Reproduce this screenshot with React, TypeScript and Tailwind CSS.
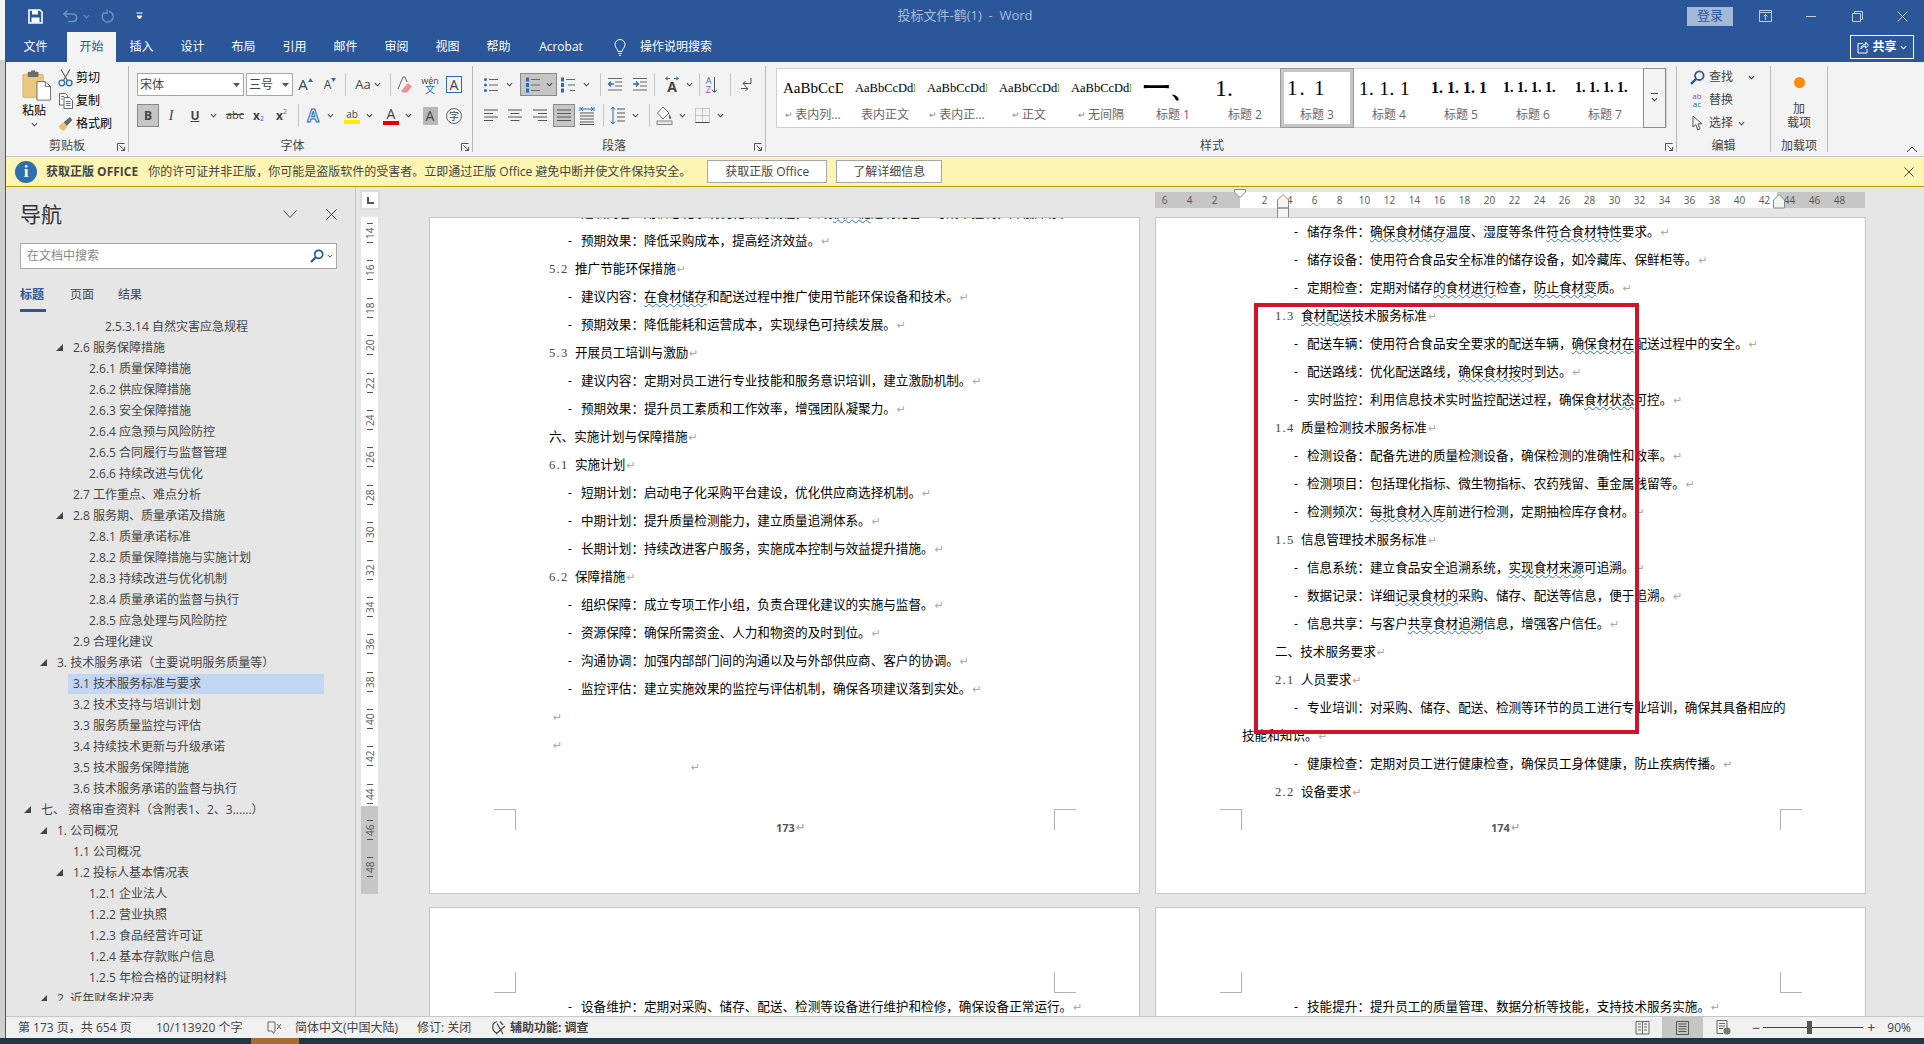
import React from "react";

const cx = (...a: (string | undefined | false)[]) => a.filter(Boolean).join(" ");

function Chev({ c = "#444", s = 7 }: { c?: string; s?: number }) {
  return (
    <svg width={s} height={s} viewBox="0 0 8 8" className="shrink-0">
      <path d="M1 2.5 L4 5.5 L7 2.5" fill="none" stroke={c} strokeWidth="1.2" />
    </svg>
  );
}

function Slot({ w, children, className }: { w: string; children?: React.ReactNode; className?: string }) {
  return <div className={cx("flex h-[23px] shrink-0 items-center justify-center", w, className)}>{children}</div>;
}

function Sep({ className }: { className?: string }) {
  return <div className={cx("h-[23px] w-px shrink-0 bg-[#c6c6c6]", className)} />;
}

function Launcher() {
  return (
    <svg width="8" height="8" viewBox="0 0 8 8" className="absolute bottom-[5px] right-[3px]">
      <path d="M0.5 7.5V0.5H7.5M2.5 2.5L7 7M7.5 4V7.5H4" fill="none" stroke="#555" strokeWidth="1" />
    </svg>
  );
}

function Lines({ kind }: { kind: "left" | "center" | "right" | "just" }) {
  const rows =
    kind === "left"
      ? ["M1 2H15", "M1 5.5H10", "M1 9H15", "M1 12.5H10"]
      : kind === "center"
        ? ["M1 2H15", "M3.5 5.5H12.5", "M1 9H15", "M3.5 12.5H12.5"]
        : kind === "right"
          ? ["M1 2H15", "M6 5.5H15", "M1 9H15", "M6 12.5H15"]
          : ["M1 2H15", "M1 5.5H15", "M1 9H15", "M1 12.5H15"];
  return (
    <svg width="16" height="15" viewBox="0 0 16 15">
      {rows.map((d) => (
        <path key={d} d={d} stroke="#555" strokeWidth="1" />
      ))}
    </svg>
  );
}

function Paste() {
  return (
    <svg width="29" height="31" viewBox="0 0 30 36" preserveAspectRatio="none">
      <rect x="1" y="5" width="21" height="27" rx="1.5" fill="#eac77e" stroke="#d8b163" />
      <rect x="6" y="2" width="11" height="6" rx="1" fill="#6b6b6b" />
      <rect x="9.5" y="0.5" width="4" height="3" fill="#6b6b6b" />
      <path d="M15.5 13.5H24L29.5 19V35H15.5Z" fill="#fff" stroke="#666" />
      <path d="M24 13.5V19H29.5" fill="none" stroke="#666" />
    </svg>
  );
}

function Scissors() {
  return (
    <svg width="15" height="18" viewBox="0 0 15 18">
      <path d="M3 0.5L9.5 11.5M12 0.5L5.5 11.5" stroke="#666" strokeWidth="1.2" fill="none" />
      <circle cx="3.8" cy="14" r="2.8" fill="none" stroke="#2b6cb8" strokeWidth="1.3" />
      <circle cx="11.2" cy="14" r="2.8" fill="none" stroke="#2b6cb8" strokeWidth="1.3" />
    </svg>
  );
}

function Copy() {
  return (
    <svg width="14" height="16" viewBox="0 0 14 16">
      <path d="M0.5 0.5H6.5L8.5 2.5V12H0.5Z" fill="#fff" stroke="#666" />
      <path d="M5 4.5H10.5L13.5 7.5V15.5H5Z" fill="#fff" stroke="#666" />
      <path d="M7 8.5H11.5M7 10.5H11.5M7 12.5H11.5M2 3.5H5M2 6H4" stroke="#2b6cb8" strokeWidth="0.9" />
    </svg>
  );
}

function Brush() {
  return (
    <svg width="16" height="16" viewBox="0 0 16 16">
      <path d="M0.5 10.5L5.5 6L10 11L6 15.5C3.5 15 1.5 13 0.5 10.5Z" fill="#e9c27a" />
      <path d="M6 6L12.5 0.5L15.5 3.5L9.5 10Z" fill="#6a6a6a" />
    </svg>
  );
}

function SearchIcon({ s = 14 }: { s?: number }) {
  return (
    <svg width={s} height={s} viewBox="0 0 14 14">
      <circle cx="8.7" cy="5.3" r="4" fill="none" stroke="#2b579a" strokeWidth="1.7" />
      <path d="M5.8 8.2L1 13" stroke="#2b579a" strokeWidth="2.2" />
    </svg>
  );
}

function Tri() {
  return (
    <svg width="7" height="7" viewBox="0 0 7 7" className="shrink-0">
      <path d="M7 0V7H0Z" fill="#444" />
    </svg>
  );
}

function GroupLabel({ children, className }: { children: React.ReactNode; className?: string }) {
  return (
    <div className={cx("absolute bottom-[2px] left-0 text-center text-[12px] leading-[16px] text-[#444]", className ?? "right-0")}>{children}</div>
  );
}

function Clipboard() {
  return (
    <div className="relative flex h-full w-[122px] shrink-0 pl-[16px] pt-[8px]">
      <div className="flex w-[36px] flex-col items-start">
        <Paste />
        <span className="mt-[3px] text-[12px] leading-[14px]">粘贴</span>
        <span className="ml-[9px] mt-[3px]">
          <Chev />
        </span>
      </div>
      <div className="-mt-[1px] flex flex-col gap-[5px] text-[12px] leading-[18px]">
        <div className="flex h-[18px] items-center gap-[3px]"><span className="flex w-[15px] justify-center"><Scissors /></span>剪切</div>
        <div className="flex h-[18px] items-center gap-[3px]"><span className="flex w-[15px] justify-center"><Copy /></span>复制</div>
        <div className="flex h-[18px] items-center gap-[3px]"><span className="flex w-[15px] justify-center"><Brush /></span>格式刷</div>
      </div>
      <GroupLabel>剪贴板</GroupLabel>
      <Launcher />
    </div>
  );
}

function Vbar() {
  return <div className="my-[4px] h-[86px] w-px shrink-0 bg-[#b9b9b9]" />;
}

function Combo({ w, label }: { w: string; label: string }) {
  return (
    <div className={cx("flex h-[23px] shrink-0 items-center justify-between border border-[#a6a6a6] bg-white pl-[2px] pr-[3px] text-[12px]", w)}>
      <span>{label}</span>
      <svg width="7" height="4" viewBox="0 0 7 4"><path d="M0 0H7L3.5 4Z" fill="#555" /></svg>
    </div>
  );
}

function FontGroup() {
  return (
    <div className="relative h-full w-[343px] shrink-0 pl-[8px] pt-[11px] text-[#444]">
      <div className="flex h-[23px] items-center">
        <Combo w="w-[107px]" label="宋体" />
        <Combo w="ml-[2px] w-[47px]" label="三号" />
        <Slot w="w-[25px]">
          <span className="text-[15px] leading-none">A</span>
          <svg width="5" height="4" viewBox="0 0 5 4" className="mb-[10px]"><path d="M0 4L2.5 0L5 4Z" fill="#2b6cb8" /></svg>
        </Slot>
        <Slot w="w-[24px]">
          <span className="text-[12px] leading-none">A</span>
          <svg width="5" height="4" viewBox="0 0 5 4" className="mb-[10px]"><path d="M0 0L2.5 4L5 0Z" fill="#2b6cb8" /></svg>
        </Slot>
        <Sep className="ml-[3px]" />
        <Slot w="w-[44px]" className="gap-[3px]"><span className="text-[13px]">Aa</span><Chev /></Slot>
        <Sep />
        <Slot w="w-[27px]">
          <svg width="16" height="18" viewBox="0 0 16 18">
            <path d="M1 13L6 1H8L10 6" fill="none" stroke="#666" />
            <path d="M4 15L11 7L15 10.5L10 16.5H6Z" fill="#ef8f9a" />
          </svg>
        </Slot>
        <Slot w="w-[24px]">
          <div className="flex flex-col items-center text-[9px] leading-[9px]">
            <span>wén</span>
            <span className="text-[10px] text-[#2b6cb8]">文</span>
          </div>
        </Slot>
        <Slot w="w-[24px]">
          <div className="flex h-[17px] w-[16px] items-center justify-center border border-[#2b6cb8] text-[14px] leading-none">A</div>
        </Slot>
      </div>
      <div className="mt-[8px] flex h-[23px] items-center">
        <Slot w="w-[22px]" className="border border-[#8a8a8a] bg-[#c6c6c6]"><b className="text-[12px]">B</b></Slot>
        <Slot w="w-[24px]"><i className="font-['Liberation_Serif',serif] text-[14px]">I</i></Slot>
        <Slot w="w-[24px]"><b className="text-[12px] underline">U</b></Slot>
        <Slot w="w-[12px]"><Chev /></Slot>
        <Slot w="ml-[4px] w-[24px]"><span className="text-[11px] line-through">abc</span></Slot>
        <Slot w="w-[23px]"><b className="text-[12px]">x</b><span className="mt-[7px] text-[7px] text-[#2b6cb8]">2</span></Slot>
        <Slot w="w-[23px]"><b className="text-[12px]">x</b><span className="mb-[7px] text-[7px] text-[#2b6cb8]">2</span></Slot>
        <Sep className="ml-[5px]" />
        <Slot w="ml-[2px] w-[24px]"><span className="text-[17px] font-bold leading-none text-[#dbe9f7] [-webkit-text-stroke:1px_#2b6cb8]">A</span></Slot>
        <Slot w="w-[10px]"><Chev /></Slot>
        <Slot w="ml-[5px] w-[24px]">
          <div className="flex flex-col items-center leading-none">
            <span className="text-[10px] leading-[12px]">ab</span>
            <span className="h-[4px] w-[16px] bg-[#ffeb00]" />
          </div>
        </Slot>
        <Slot w="w-[10px]"><Chev /></Slot>
        <Slot w="ml-[5px] w-[24px]">
          <div className="flex flex-col items-center leading-none">
            <span className="text-[14px] leading-[14px]">A</span>
            <span className="h-[4px] w-[16px] bg-[#e80000]" />
          </div>
        </Slot>
        <Slot w="w-[10px]"><Chev /></Slot>
        <Slot w="ml-[7px] w-[20px]"><div className="flex h-[18px] w-[15px] items-center justify-center bg-[#b8b8b8] text-[14px] leading-none">A</div></Slot>
        <Slot w="ml-[4px] w-[20px]"><div className="flex h-[16px] w-[16px] items-center justify-center rounded-full border border-[#666] text-[10px] leading-none">字</div></Slot>
      </div>
      <GroupLabel className="right-[16px]">字体</GroupLabel>
      <Launcher />
    </div>
  );
}

function ListIcon({ num = false, multi = false }: { num?: boolean; multi?: boolean }) {
  return (
    <svg width="16" height="16" viewBox="0 0 16 16">
      {[2.5, 8, 13.5].map((y, i) => (
        <g key={y}>
          {num ? (
            <rect x="1" y={y - 2} width="3" height="4" fill="#2b6cb8" />
          ) : (
            <circle cx="2.5" cy={y} r="1.5" fill="#2b6cb8" />
          )}
          <path d={`M${multi ? 6 + i * 2 : 6} ${y}H15`} stroke="#666" />
        </g>
      ))}
    </svg>
  );
}

function Indent({ out }: { out?: boolean }) {
  return (
    <svg width="16" height="15" viewBox="0 0 16 15">
      <path d="M1 1.5H15M8 5H15M8 9H15M1 13H15" stroke="#666" />
      <path d={out ? "M7 7H1.5M4 4.5L1.5 7L4 9.5" : "M1 7H6.5M4 4.5L6.5 7L4 9.5"} fill="none" stroke="#2b6cb8" strokeWidth="1.3" />
    </svg>
  );
}

function ParaGroup() {
  return (
    <div className="relative h-full w-[292px] shrink-0 pl-[6px] pt-[11px] text-[#444]">
      <div className="flex h-[23px] items-center">
        <Slot w="w-[24px]"><ListIcon /></Slot>
        <Slot w="w-[12px]"><Chev /></Slot>
        <Slot w="ml-[5px] w-[37px]" className="gap-[5px] border border-[#8a8a8a] bg-[#c6c6c6]"><ListIcon num /><Chev /></Slot>
        <Slot w="w-[22px]"><ListIcon num multi /></Slot>
        <Slot w="w-[14px]"><Chev /></Slot>
        <Sep className="ml-[7px]" />
        <Slot w="ml-[2px] w-[24px]"><Indent out /></Slot>
        <Slot w="ml-[1px] w-[24px]"><Indent /></Slot>
        <Sep className="ml-[2px]" />
        <Slot w="ml-[5px] w-[24px]">
          <div className="flex flex-col items-center leading-none">
            <svg width="16" height="5" viewBox="0 0 16 5"><path d="M1 2.5L3.5 0.5V4.5ZM15 2.5L12.5 0.5V4.5Z" fill="#2b6cb8" /><path d="M3 2.5H6M10 2.5H13" stroke="#2b6cb8" /></svg>
            <span className="text-[14px] font-bold leading-[12px]">A</span>
          </div>
        </Slot>
        <Slot w="w-[10px]"><Chev /></Slot>
        <Sep className="ml-[5px]" />
        <Slot w="w-[24px]">
          <div className="flex flex-col text-[9px] leading-[9px]"><span className="text-[#2b6cb8]">A</span><span className="text-[#8d4fb0]">Z</span></div>
          <svg width="7" height="18" viewBox="0 0 7 18"><path d="M3.5 1V16M1 13.5L3.5 16.5L6 13.5" fill="none" stroke="#555" /></svg>
        </Slot>
        <Sep className="ml-[6px]" />
        <Slot w="ml-[3px] w-[24px]">
          <svg width="13" height="16" viewBox="0 0 13 16">
            <path d="M11 1V6.5H3M5.5 4L3 6.5L5.5 9M1 11.5H8M5.5 9.5L8 11.5L5.5 14" fill="none" stroke="#555" />
          </svg>
        </Slot>
      </div>
      <div className="mt-[8px] flex h-[23px] items-center">
        <Slot w="w-[24px]"><Lines kind="left" /></Slot>
        <Slot w="w-[24px]"><Lines kind="center" /></Slot>
        <Slot w="ml-[1px] w-[24px]"><Lines kind="right" /></Slot>
        <Slot w="ml-[1px] w-[22px]" className="border border-[#8a8a8a] bg-[#c6c6c6]"><Lines kind="just" /></Slot>
        <Slot w="w-[24px]">
          <svg width="16" height="19" viewBox="0 0 16 19">
            <path d="M1 7H15M1 10H15M1 13H15M1 16H15M1 18.5H15" stroke="#555" />
            <path d="M1 1V5M15 1V5M2 3H14M4 1L2 3L4 5M12 1L14 3L12 5" fill="none" stroke="#2b6cb8" />
          </svg>
        </Slot>
        <Sep className="ml-[4px]" />
        <Slot w="ml-[2px] w-[24px]">
          <svg width="16" height="19" viewBox="0 0 16 19">
            <path d="M7 3H15M7 7H15M7 11H15M7 15H15" stroke="#555" />
            <path d="M3 1V18M0.8 3.5L3 1L5.2 3.5M0.8 15.5L3 18L5.2 15.5" fill="none" stroke="#2b6cb8" />
          </svg>
        </Slot>
        <Slot w="w-[10px]"><Chev /></Slot>
        <Sep className="ml-[9px]" />
        <Slot w="ml-[2px] w-[24px]">
          <svg width="17" height="19" viewBox="0 0 17 19">
            <path d="M7 1L1.5 7L7 13L13 7Z" fill="#fff" stroke="#666" />
            <path d="M13 8C14.5 10 16 12 14.5 13C13 13.5 12.5 11 13 8Z" fill="#2b6cb8" />
            <rect x="1" y="15" width="15" height="3.5" fill="#e7e7e7" stroke="#888" />
          </svg>
        </Slot>
        <Slot w="w-[12px]"><Chev /></Slot>
        <Slot w="ml-[2px] w-[24px]">
          <svg width="15" height="15" viewBox="0 0 15 15">
            <path d="M0.5 0.5H14.5V14.5H0.5ZM7.5 0.5V14.5M0.5 7.5H14.5" fill="none" stroke="#999" strokeDasharray="1 1" />
            <path d="M0.5 14.5H14.5" stroke="#444" />
          </svg>
        </Slot>
        <Slot w="w-[12px]"><Chev /></Slot>
      </div>
      <GroupLabel className="right-[10px]">段落</GroupLabel>
      <Launcher />
    </div>
  );
}

type StyleItem = { p: string; l: string; cls: string; mark?: boolean; active?: boolean };
const styleItems: StyleItem[] = [
  { p: "AaBbCcD", l: "表内列...", cls: "text-[15px] font-['Liberation_Sans',sans-serif]", mark: true },
  { p: "AaBbCcDdE", l: "表内正文", cls: "text-[12.5px]" },
  { p: "AaBbCcDdE", l: "表内正...", cls: "text-[12.5px]", mark: true },
  { p: "AaBbCcDdE", l: "正文", cls: "text-[12.5px]", mark: true },
  { p: "AaBbCcDdE", l: "无间隔", cls: "text-[12.5px]", mark: true },
  { p: "一、", l: "标题 1", cls: "text-[27px] font-bold" },
  { p: "1.        1", l: "标题 2", cls: "whitespace-pre text-[24px]" },
  { p: "1. 1", l: "标题 3", cls: "text-[21px] tracking-[2px]", active: true },
  { p: "1. 1. 1", l: "标题 4", cls: "text-[19px] tracking-[0.5px]" },
  { p: "1. 1. 1. 1", l: "标题 5", cls: "text-[16px] font-bold" },
  { p: "1. 1. 1. 1.", l: "标题 6", cls: "text-[14px] font-bold" },
  { p: "1. 1. 1. 1.", l: "标题 7", cls: "text-[14px] font-bold" },
];

function StyleGroup() {
  return (
    <div className="relative h-full w-[910px] shrink-0 pl-[10px] pt-[6px]">
      <div className="flex h-[60px] w-[891px] border border-[#d0d0d0] bg-white">
        {styleItems.map((s, i) => (
          <div
            key={i}
            className={cx(
              "flex h-full w-[72px] shrink-0 flex-col items-center overflow-hidden",
              s.active && "border-[3px] border-[#c6c6c6] outline-1 outline-[#999]",
            )}
          >
            <div className={cx("flex h-[38px] w-[60px] shrink-0 items-center overflow-hidden whitespace-nowrap font-['Liberation_Serif',serif] leading-none text-black", s.active ? "mt-[-3px]" : "", s.cls)}>
              {s.p}
            </div>
            <div className="flex items-center gap-[2px] whitespace-nowrap text-[12px] leading-[16px] text-[#666]">
              {s.mark && <span className="text-[9px] text-[#888]">↵</span>}
              {s.l}
            </div>
          </div>
        ))}
        <div className="-my-px ml-[2px] flex w-[24px] flex-1 flex-col items-center justify-center border border-[#8f8f8f] bg-[#f3f3f3]">
          <div className="h-px w-[7px] bg-[#444]" />
          <div className="mt-[2px]"><Chev s={7} /></div>
        </div>
      </div>
      <GroupLabel className="right-[18px]">样式</GroupLabel>
      <Launcher />
    </div>
  );
}

function EditGroup() {
  return (
    <div className="relative h-full w-[93px] shrink-0 pl-[12px] pt-[6px] text-[12px] text-[#444]">
      <div className="flex flex-col gap-[5px]">
        <div className="flex h-[18px] items-center gap-[4px]"><span className="flex w-[16px] justify-center"><SearchIcon s={15} /></span>查找<span className="ml-[11px]"><Chev /></span></div>
        <div className="flex h-[18px] items-center gap-[4px]"><span className="flex w-[16px] flex-col items-center text-[8px] leading-[8px]"><span className="text-[#8d4fb0]">ab</span><span className="text-[#2b6cb8]">ac</span></span>替换</div>
        <div className="flex h-[18px] items-center gap-[4px]">
          <span className="flex w-[16px] justify-center">
            <svg width="11" height="16" viewBox="0 0 11 16"><path d="M1 1V12L3.8 9.5L5.8 15L8 14L6 8.8H10Z" fill="#fff" stroke="#555" /></svg>
          </span>
          选择<span className="ml-[1px]"><Chev /></span>
        </div>
      </div>
      <GroupLabel>编辑</GroupLabel>
    </div>
  );
}

function AddinGroup() {
  return (
    <div className="relative h-full w-[56px] shrink-0 text-[#444]">
      <div className="flex flex-col items-center pt-[15px] text-[12px] leading-[14px]">
        <div className="h-[11px] w-[11px] rounded-full bg-[#f98a0c]" />
        <span className="mt-[14px]">加</span>
        <span>载项</span>
      </div>
      <GroupLabel>加载项</GroupLabel>
    </div>
  );
}

function Ribbon() {
  return (
    <div className="relative flex h-[94px] shrink-0 bg-[#f3f3f3]">
      <Clipboard />
      <Vbar />
      <FontGroup />
      <Vbar />
      <ParaGroup />
      <Vbar />
      <StyleGroup />
      <Vbar />
      <EditGroup />
      <Vbar />
      <AddinGroup />
      <Vbar />
      <svg width="12" height="7" viewBox="0 0 12 7" className="absolute bottom-[3px] right-[6px]">
        <path d="M1 6L6 1L11 6" fill="none" stroke="#444" />
      </svg>
    </div>
  );
}

function TitleBar() {
  return (
    <div className="grid h-[32px] shrink-0 grid-cols-[1fr_auto_1fr] items-center bg-[#2b579a]">
      <div className="flex items-center pl-[22px]">
        <svg width="15" height="15" viewBox="0 0 15 15">
          <path d="M1 1H12L14 3V14H1Z" fill="none" stroke="#fff" strokeWidth="1.6" />
          <rect x="4" y="1" width="6" height="4.5" fill="#fff" />
          <rect x="3.5" y="8.5" width="8" height="5" fill="#fff" />
        </svg>
        <svg width="15" height="14" viewBox="0 0 15 14" className="ml-[20px]">
          <path d="M1 5H9.5C15 5 15 12.5 9.5 12.5H5M4.5 1.5L1 5L4.5 8.5" fill="none" stroke="#6f8fbd" strokeWidth="1.6" />
        </svg>
        <span className="ml-[5px]"><Chev c="#6f8fbd" /></span>
        <svg width="14" height="15" viewBox="0 0 14 15" className="ml-[11px]">
          <path d="M8 2.2A5.5 5.5 0 1 1 3 3.5M6 0.5V4.2H2.5" fill="none" stroke="#6f8fbd" strokeWidth="1.5" />
        </svg>
        <svg width="7" height="8" viewBox="0 0 7 8" className="ml-[21px]">
          <path d="M0.5 1H6.5M1 4H6L3.5 7Z" stroke="#fff" fill="#fff" />
        </svg>
      </div>
      <div className="whitespace-pre text-[13px] text-[#a9bcd8]">投标文件-鹤(1)  -  Word</div>
      <div className="flex h-full items-center justify-end">
        <div className="mr-[9px] flex h-[19px] w-[46px] items-center justify-center bg-[#a3b9d6] text-[13px] text-[#2b579a]">登录</div>
        <div className="flex h-full w-[46px] items-center justify-center">
          <svg width="13" height="12" viewBox="0 0 13 12"><path d="M0.5 0.5H12.5V11.5H0.5ZM0.5 2.5H12.5M6.5 10V4.5M4.5 6.5L6.5 4.5L8.5 6.5" fill="none" stroke="#c3d0e3" /></svg>
        </div>
        <div className="flex h-full w-[46px] items-center justify-center"><div className="h-px w-[10px] bg-[#c3d0e3]" /></div>
        <div className="flex h-full w-[46px] items-center justify-center">
          <svg width="11" height="11" viewBox="0 0 11 11"><path d="M0.5 2.5H8.5V10.5H0.5ZM2.5 2.5V0.5H10.5V8.5H8.5" fill="none" stroke="#c3d0e3" /></svg>
        </div>
        <div className="flex h-full w-[44px] items-center justify-center">
          <svg width="11" height="11" viewBox="0 0 11 11"><path d="M0.5 0.5L10.5 10.5M10.5 0.5L0.5 10.5" stroke="#c3d0e3" /></svg>
        </div>
      </div>
    </div>
  );
}

const tabs: [string, string][] = [
  ["插入", "w-[51px]"],
  ["设计", "w-[51px]"],
  ["布局", "w-[51px]"],
  ["引用", "w-[51px]"],
  ["邮件", "w-[51px]"],
  ["审阅", "w-[51px]"],
  ["视图", "w-[51px]"],
  ["帮助", "w-[51px]"],
  ["Acrobat", "w-[74px]"],
];

function TabBar() {
  return (
    <div className="flex h-[30px] shrink-0 items-stretch bg-[#2b579a] text-[12px] text-white">
      <div className="ml-[5px] flex w-[49px] items-center justify-center">文件</div>
      <div className="ml-[7px] flex w-[49px] items-center justify-center bg-[#f3f3f3] text-[#2b579a]">开始</div>
      {tabs.map(([t, w]) => (
        <div key={t} className={cx("flex items-center justify-center", w)}>{t}</div>
      ))}
      <div className="ml-[12px] flex w-[20px] items-center justify-center">
        <svg width="12" height="17" viewBox="0 0 12 17"><path d="M4 12.5C4 10 1 9 1 5.5A5 5 0 0 1 11 5.5C11 9 8 10 8 12.5ZM4.5 14.5H7.5M5 16.5H7" fill="none" stroke="#fff" /></svg>
      </div>
      <div className="ml-[10px] flex items-center">操作说明搜索</div>
      <div className="ml-auto mr-[10px] flex items-center">
        <div className="flex h-[24px] w-[64px] items-center justify-center gap-[3px] border border-white">
          <svg width="12" height="13" viewBox="0 0 12 13"><path d="M6 2.5H1V12H10V8M4 8C4 5 6 3.5 8.5 3.5V1L11.5 4.2L8.5 7V5C6.5 5 5 6 4 8Z" fill="none" stroke="#fff" /></svg>
          <b>共享</b>
          <Chev c="#fff" />
        </div>
      </div>
    </div>
  );
}

function Notice() {
  return (
    <div className="flex h-[30px] shrink-0 items-center border-b border-[#bf9a00] bg-[#fdf5b4] text-[12px] text-[#444]">
      <div className="ml-[9px] flex h-[22px] w-[22px] items-center justify-center rounded-full bg-[#2f6fb0] font-['Liberation_Serif',serif] text-[17px] font-bold text-white">i</div>
      <b className="ml-[9px]">获取正版 OFFICE</b>
      <span className="ml-[10px] w-[559px] whitespace-nowrap">你的许可证并非正版，你可能是盗版软件的受害者。立即通过正版 Office 避免中断并使文件保持安全。</span>
      <div className="flex h-[23px] w-[120px] items-center justify-center border border-[#a6a6a6] bg-white">获取正版 Office</div>
      <div className="ml-[9px] flex h-[23px] w-[106px] items-center justify-center border border-[#a6a6a6] bg-white">了解详细信息</div>
      <svg width="10" height="10" viewBox="0 0 10 10" className="ml-auto mr-[10px]"><path d="M0.5 0.5L9.5 9.5M9.5 0.5L0.5 9.5" stroke="#444" /></svg>
    </div>
  );
}

type NavRow = [string, number, boolean?, boolean?];
const navRows: NavRow[] = [
  ["2.5.3.14 自然灾害应急规程", 105],
  ["2.6 服务保障措施", 73, true],
  ["2.6.1 质量保障措施", 89],
  ["2.6.2 供应保障措施", 89],
  ["2.6.3 安全保障措施", 89],
  ["2.6.4 应急预与风险防控", 89],
  ["2.6.5 合同履行与监督管理", 89],
  ["2.6.6 持续改进与优化", 89],
  ["2.7 工作重点、难点分析", 73],
  ["2.8 服务期、质量承诺及措施", 73, true],
  ["2.8.1 质量承诺标准", 89],
  ["2.8.2 质量保障措施与实施计划", 89],
  ["2.8.3 持续改进与优化机制", 89],
  ["2.8.4 质量承诺的监督与执行", 89],
  ["2.8.5 应急处理与风险防控", 89],
  ["2.9 合理化建议", 73],
  ["3. 技术服务承诺（主要说明服务质量等）", 57, true],
  ["3.1 技术服务标准与要求", 73, false, true],
  ["3.2 技术支持与培训计划", 73],
  ["3.3 服务质量监控与评估", 73],
  ["3.4 持续技术更新与升级承诺", 73],
  ["3.5 技术服务保障措施", 73],
  ["3.6 技术服务承诺的监督与执行", 73],
  ["七、 资格审查资料（含附表1、2、3......）", 41, true],
  ["1. 公司概况", 57, true],
  ["1.1 公司概况", 73],
  ["1.2 投标人基本情况表", 73, true],
  ["1.2.1 企业法人", 89],
  ["1.2.2 营业执照", 89],
  ["1.2.3 食品经营许可证", 89],
  ["1.2.4 基本存款账户信息", 89],
  ["1.2.5 年检合格的证明材料", 89],
  ["2. 近年财务状况表", 57, true],
];

const indentCls: Record<number, string> = {
  41: "pl-[35px]",
  57: "pl-[51px]",
  73: "pl-[67px]",
  89: "pl-[83px]",
  105: "pl-[99px]",
};

function NavPane() {
  return (
    <div className="flex w-[350px] shrink-0 flex-col border-r border-[#c6c6c6] bg-[#e6e6e6]">
      <div className="flex h-[54px] shrink-0 items-center pl-[14px] pr-[18px]">
        <span className="text-[21px] leading-none text-[#333]">导航</span>
        <svg width="14" height="9" viewBox="0 0 14 9" className="ml-auto"><path d="M0.5 0.5L7 7.5L13.5 0.5" fill="none" stroke="#444" /></svg>
        <svg width="11" height="11" viewBox="0 0 11 11" className="ml-[29px]"><path d="M0.5 0.5L10.5 10.5M10.5 0.5L0.5 10.5" stroke="#444" /></svg>
      </div>
      <div className="ml-[14px] mt-[2px] flex h-[26px] w-[317px] shrink-0 items-center border border-[#a9a9a9] bg-white pl-[6px] pr-[3px] text-[12px] text-[#888]">
        在文档中搜索
        <span className="ml-auto"><SearchIcon /></span>
        <span className="ml-[3px]"><Chev s={6} /></span>
      </div>
      <div className="ml-[14px] mt-[17px] flex shrink-0 gap-[24px] text-[12px] leading-[18px] text-[#444]">
        <div className="w-[26px] border-b-[3px] border-[#2b579a] pb-[5px] font-bold text-[#2b579a]">标题</div>
        <div>页面</div>
        <div>结果</div>
      </div>
      <div className="mt-[4px] h-[685px] overflow-hidden text-[12px] text-[#444]">
        {navRows.map(([t, x, tri, sel]) => (
          <div key={t} className={cx("flex h-[21px] items-center whitespace-nowrap", indentCls[x])}>
            {tri && <span className="ml-[-17px] mr-[10px] flex"><Tri /></span>}
            <span className={cx(sel && "ml-[-5px] flex h-[20px] w-[256px] items-center bg-[#c3d6f3] pl-[5px]")}>{t}</span>
          </div>
        ))}
      </div>
    </div>
  );
}

function VTick() {
  return <div className="h-px w-[6px] shrink-0 bg-[#555]" />;
}

function VNum({ n }: { n: number }) {
  return (
    <div className="flex h-[37.4px] flex-col items-center justify-center gap-[2px]">
      <VTick />
      <span className="h-[14px] text-center text-[10px] leading-[14px] text-[#555] [writing-mode:vertical-rl] rotate-180">{n}</span>
      <VTick />
    </div>
  );
}

function VRuler() {
  const nums = [14, 16, 18, 20, 22, 24, 26, 28, 30, 32, 34, 36, 38, 40, 42, 44];
  return (
    <div className="flex w-[73px] shrink-0 flex-col">
      <div className="ml-[4px] mt-[3px] flex h-[20px] w-[20px] items-center justify-center bg-[#dcdcdc]">
        <div className="flex h-[16px] w-[16px] items-center justify-center bg-white">
          <svg width="7" height="7" viewBox="0 0 7 7"><path d="M1 0V6H7" fill="none" stroke="#555" strokeWidth="2" /></svg>
        </div>
      </div>
      <div className="ml-[5px] mt-[7px] flex w-[17px] flex-col">
        <div className="h-[589px] overflow-hidden bg-white">
          <div className="mt-[-2.7px]">{nums.map((n) => <VNum key={n} n={n} />)}</div>
        </div>
        <div className="h-[88px] overflow-hidden bg-[#c6c6c6] pt-[5.3px]">
          <VNum n={46} />
          <VNum n={48} />
        </div>
      </div>
    </div>
  );
}

function HNum({ n }: { n: number }) {
  return <div className="w-[25px] shrink-0 text-center text-[10px] leading-[16px] text-[#555]">{n}</div>;
}

function HRuler() {
  const white = Array.from({ length: 21 }, (_, i) => (i + 1) * 2);
  return (
    <div className="relative flex h-[16px] w-[710px]">
      <div className="flex w-[85px] justify-end bg-[#c6c6c6] pr-[13px]">
        {[6, 4, 2].map((n) => <HNum key={n} n={n} />)}
      </div>
      <div className="flex w-[537px] bg-white pl-[12px]">
        {white.map((n) => <HNum key={n} n={n} />)}
      </div>
      <div className="flex flex-1 bg-[#c6c6c6]">
        {[44, 46, 48].map((n) => <HNum key={n} n={n} />)}
      </div>
      <svg width="12" height="9" viewBox="0 0 12 9" className="absolute left-[79px] top-[-3px]"><path d="M0.5 0.5H11.5V3L6 8.5L0.5 3Z" fill="#fff" stroke="#888" /></svg>
      <svg width="12" height="24" viewBox="0 0 12 24" className="absolute left-[122px] top-[2px]"><path d="M6 0.5L11.5 6V14H0.5V6ZM0.5 14H11.5V23.5H0.5Z" fill="#f4f4f4" stroke="#888" /></svg>
      <svg width="12" height="15" viewBox="0 0 12 15" className="absolute left-[618px] top-[2px]"><path d="M6 0.5L11.5 6V14H0.5V6Z" fill="#f4f4f4" stroke="#888" /></svg>
    </div>
  );
}

function Mark() {
  return <span className="ml-[1px] font-['DejaVu_Sans',sans-serif] text-[11px] text-[#a9a9a9]">↵</span>;
}

function Wavy({ s }: { s: string }) {
  const parts = s.split(/(\[\[.*?\]\])/);
  return (
    <>
      {parts.map((p, i) =>
        p.startsWith("[[") ? (
          <span key={i} className="underline decoration-[#2b6fd8] decoration-wavy decoration-1 underline-offset-2">{p.slice(2, -2)}</span>
        ) : (
          <span key={i}>{p}</span>
        ),
      )}
    </>
  );
}

function ListRow({ t, mark = true }: { t: string; mark?: boolean }) {
  return (
    <div className="flex h-[28px] shrink-0 items-center whitespace-nowrap pl-[138px]">
      <span className="w-[13px]">-</span>
      <span><Wavy s={t} /></span>
      {mark && <Mark />}
    </div>
  );
}

function HeadRow({ n, t }: { n: string; t: string }) {
  return (
    <div className="flex h-[28px] shrink-0 items-center whitespace-nowrap pl-[119px]">
      <span className="w-[26px] font-['Liberation_Serif',serif] text-[12.6px] tracking-[1.3px] text-[#444]">{n}</span>
      <span><Wavy s={t} /></span>
      <Mark />
    </div>
  );
}

function PlainRow({ t }: { t: string }) {
  return (
    <div className="flex h-[28px] shrink-0 items-center whitespace-nowrap pl-[119px]">
      <span>{t}</span>
      <Mark />
    </div>
  );
}

function CornerMarks({ top, a, b }: { top: string; a: string; b: string }) {
  return (
    <>
      <div className={cx("absolute h-[21px] w-[22px] border-r border-t border-[#b0b0b0]", top, a)} />
      <div className={cx("absolute h-[21px] w-[22px] border-l border-t border-[#b0b0b0]", top, b)} />
    </>
  );
}

const pageCls = "relative overflow-hidden border border-[#c6c6c6] bg-white text-[12.6px] leading-none text-black";

function PageOne() {
  return (
    <div className={cx(pageCls, "h-[677px]")}>
      <div className="mt-[-19px] flex flex-col">
        <ListRow t="建议内容：用信息化系统优化采购流程，实现[[供应链]]透明化管理与成本控制，降低库存。" mark={false} />
        <ListRow t="预期效果：降低采购成本，提高经济效益。" />
        <HeadRow n="5.2" t="推广节能环保措施" />
        <ListRow t="建议内容：[[在食材储存]]和配送过程中推广使用节能环保设备和技术。" />
        <ListRow t="预期效果：降低能耗和运营成本，实现绿色可持续发展。" />
        <HeadRow n="5.3" t="开展员工培训与激励" />
        <ListRow t="建议内容：定期对员工进行专业技能和服务意识培训，建立激励机制。" />
        <ListRow t="预期效果：提升员工素质和工作效率，增强团队凝聚力。" />
        <PlainRow t="六、实施计划与保障措施" />
        <HeadRow n="6.1" t="实施计划" />
        <ListRow t="短期计划：启动电子化采购平台建设，优化供应商选择机制。" />
        <ListRow t="中期计划：提升质量检测能力，建立质量追溯体系。" />
        <ListRow t="长期计划：持续改进客户服务，实施成本控制与效益提升措施。" />
        <HeadRow n="6.2" t="保障措施" />
        <ListRow t="组织保障：成立专项工作小组，负责合理化建议的实施与监督。" />
        <ListRow t="资源保障：确保所需资金、人力和物资的及时到位。" />
        <ListRow t="沟通协调：加强内部部门间的沟通以及与外部供应商、客户的协调。" />
        <ListRow t="监控评估：建立实施效果的监控与评估机制，确保各项建议落到实处。" />
        <div className="flex h-[28px] items-center pl-[122px]"><Mark /></div>
        <div className="flex h-[28px] items-center pl-[122px]"><Mark /></div>
        <div className="mt-[-6px] flex h-[28px] items-center pl-[260px]"><Mark /></div>
      </div>
      <CornerMarks top="top-[591px]" a="left-[64px]" b="left-[624px]" />
      <div className="absolute left-[346px] top-[604px] flex items-center text-[11px] font-bold text-[#555]">173<Mark /></div>
    </div>
  );
}

function PageTwo() {
  return (
    <div className={cx(pageCls, "h-[677px]")}>
      <div className="flex flex-col">
        <ListRow t="储存条件：[[确保食材储存]]温度、湿度等条件[[符合食材特性]]要求。" />
        <ListRow t="储存设备：使用符合食品安全标准的储存设备，如冷藏库、保鲜柜等。" />
        <ListRow t="定期检查：定期对储存[[的食材进行]]检查，[[防止食材变]]质。" />
        <HeadRow n="1.3" t="[[食材配送]]技术服务标准" />
        <ListRow t="配送车辆：使用符合食品安全要求的配送车辆，[[确保食材在]]配送过程中的安全。" />
        <ListRow t="配送路线：优化配送路线，[[确保食材按时]]到达。" />
        <ListRow t="实时监控：利用信息技术实时监控配送过程，确保[[食材状态]]可控。" />
        <HeadRow n="1.4" t="质量检测技术服务标准" />
        <ListRow t="检测设备：配备先进的质量检测设备，确保检测的准确性和效率。" />
        <ListRow t="检测项目：包括理化指标、微生物指标、农药残留、重金属残留等。" />
        <ListRow t="检测频次：[[每批食材入库]]前进行检测，定期抽检库存食材。" />
        <HeadRow n="1.5" t="信息管理技术服务标准" />
        <ListRow t="信息系统：建立食品安全追溯系统，[[实现食材来源]]可追溯。" />
        <ListRow t="数据记录：详细[[记录食材的]]采购、储存、配送等信息，便于追溯。" />
        <ListRow t="信息共享：与客户[[共享食材追溯]]信息，增强客户信任。" />
        <PlainRow t="二、技术服务要求" />
        <HeadRow n="2.1" t="人员要求" />
        <ListRow t="专业培训：对采购、储存、配送、检测等环节的员工进行专业培训，确保其具备相应的" mark={false} />
        <div className="flex h-[28px] items-center pl-[86px]">技能和知识。<Mark /></div>
        <ListRow t="健康检查：定期对员工进行健康检查，确保员工身体健康，防止疾病传播。" />
        <HeadRow n="2.2" t="设备要求" />
      </div>
      <CornerMarks top="top-[591px]" a="left-[64px]" b="left-[624px]" />
      <div className="absolute left-[335px] top-[604px] flex items-center text-[11px] font-bold text-[#555]">174<Mark /></div>
      <div className="absolute left-[98px] top-[85px] h-[431px] w-[385px] border-[4px] border-[#d0142c]" />
    </div>
  );
}

function BottomPage({ t }: { t: string }) {
  return (
    <div className="relative h-[120px] overflow-hidden border-x border-t border-[#c6c6c6] bg-white text-[12.6px] leading-none text-black">
      <div className="absolute left-[64px] top-[64px] h-[21px] w-[22px] border-b border-r border-[#b0b0b0]" />
      <div className="absolute left-[624px] top-[64px] h-[21px] w-[22px] border-b border-l border-[#b0b0b0]" />
      <div className="pt-[85px]"><ListRow t={t} /></div>
    </div>
  );
}

function Workspace() {
  return (
    <div className="flex min-h-0 flex-1 bg-[#e6e6e6]">
      <NavPane />
      <div className="flex min-w-0 flex-1">
        <VRuler />
        <div className="grid h-[829px] grid-cols-[711px_711px] grid-rows-[30px_677px_1fr] gap-x-[15px] overflow-hidden">
          <div />
          <div className="pt-[5px]"><HRuler /></div>
          <PageOne />
          <PageTwo />
          <div className="mt-[13px]"><BottomPage t="设备维护：定期对采购、储存、配送、检测等设备进行维护和检修，确保设备正常运行。" /></div>
          <div className="mt-[13px]"><BottomPage t="技能提升：提升员工的质量管理、数据分析等技能，支持技术服务实施。" /></div>
        </div>
      </div>
    </div>
  );
}

function StatusBar() {
  return (
    <div className="flex h-[22px] shrink-0 items-center border-t border-[#c6c6c6] bg-[#f1f1f1] text-[12px] text-[#444]">
      <span className="ml-[12px] w-[138px] whitespace-nowrap">第 173 页，共 654 页</span>
      <span className="w-[111px] whitespace-nowrap">10/113920 个字</span>
      <svg width="15" height="14" viewBox="0 0 15 14" className="mr-[13px]"><path d="M1 1H8V10L6.5 12.5L5 10H1ZM10 3L14 8M14 3L10 8" fill="none" stroke="#666" /></svg>
      <span className="w-[122px] whitespace-nowrap">简体中文(中国大陆)</span>
      <span className="w-[74px] whitespace-nowrap">修订: 关闭</span>
      <svg width="16" height="16" viewBox="0 0 16 16"><path d="M6 1.5A6 6 0 0 0 6 13M6 3.5L12 14M14 6L5 14M9 1.5L12 5" fill="none" stroke="#444" strokeWidth="1.2" /></svg>
      <span className="ml-[3px] font-bold">辅助功能: 调查</span>
      <div className="ml-auto flex h-full items-center">
        <svg width="15" height="15" viewBox="0 0 15 15"><path d="M1 1.5H7.5V14H1ZM7.5 1.5H14V14H7.5ZM3 4H6M3 7H6M3 10H6M9 4H12M9 7H12M9 10H12" fill="none" stroke="#666" /></svg>
        <div className="ml-[12px] flex h-full w-[41px] items-center justify-center bg-[#c6c6c6]">
          <svg width="13" height="14" viewBox="0 0 13 14"><path d="M0.5 0.5H12.5V13.5H0.5ZM2.5 3H10.5M2.5 5.5H10.5M2.5 8H10.5M2.5 10.5H10.5" fill="none" stroke="#555" /></svg>
        </div>
        <svg width="15" height="15" viewBox="0 0 15 15" className="ml-[13px]"><path d="M1 0.5H11V8M1 0.5V13.5H7M3 3.5H9M3 6H9M3 8.5H7" fill="none" stroke="#666" /><circle cx="11" cy="11" r="3.5" fill="#777" /></svg>
        <span className="ml-[21px] text-[14px] leading-none">−</span>
        <div className="ml-[3px] flex h-[13px] w-[100px] items-center">
          <div className="h-px w-[44px] bg-[#444]" />
          <div className="h-[13px] w-[5px] bg-[#555]" />
          <div className="h-px flex-1 bg-[#444]" />
        </div>
        <span className="ml-[4px] text-[14px] leading-none">+</span>
        <span className="ml-[12px] mr-[13px]">90%</span>
      </div>
    </div>
  );
}

export default function App() {
  return (
    <div className="flex h-[1044px] w-[1924px] flex-col overflow-hidden bg-[#e6e6e6] font-['Open_Sans','Noto_Sans_CJK_SC',sans-serif]">
      <div className="flex min-h-0 flex-1">
        <div className="flex w-[5px] shrink-0 flex-col bg-[#cfcfcf]">
          <div className="h-[60px] bg-[#f5f5f5]" />
        </div>
        <div className="flex min-w-0 flex-1 flex-col border-l border-[#2b579a]">
          <TitleBar />
          <TabBar />
          <Ribbon />
          <div className="h-px shrink-0 bg-[#c6c6c6]" />
          <Notice />
          <Workspace />
          <StatusBar />
        </div>
      </div>
      <div className="flex h-[6px] shrink-0 bg-[#1f3744]">
        <div className="ml-[251px] w-[48px] bg-[#a86c33]" />
      </div>
    </div>
  );
}
